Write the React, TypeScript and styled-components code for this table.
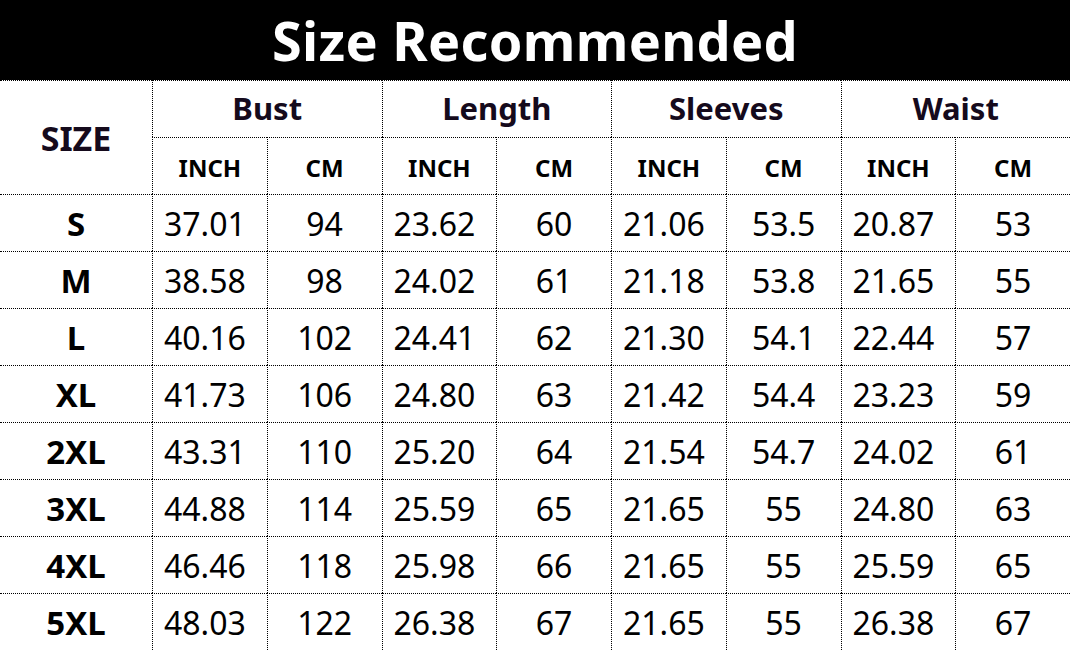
import React from "react";
import styled, { createGlobalStyle } from "styled-components";

// 사이즈 표 데이터
interface SizeRow {
  size: string;
  values: string[];
}

const groups = ["Bust", "Length", "Sleeves", "Waist"];

const rows: SizeRow[] = [
  { size: "S", values: ["37.01", "94", "23.62", "60", "21.06", "53.5", "20.87", "53"] },
  { size: "M", values: ["38.58", "98", "24.02", "61", "21.18", "53.8", "21.65", "55"] },
  { size: "L", values: ["40.16", "102", "24.41", "62", "21.30", "54.1", "22.44", "57"] },
  { size: "XL", values: ["41.73", "106", "24.80", "63", "21.42", "54.4", "23.23", "59"] },
  { size: "2XL", values: ["43.31", "110", "25.20", "64", "21.54", "54.7", "24.02", "61"] },
  { size: "3XL", values: ["44.88", "114", "25.59", "65", "21.65", "55", "24.80", "63"] },
  { size: "4XL", values: ["46.46", "118", "25.98", "66", "21.65", "55", "25.59", "65"] },
  { size: "5XL", values: ["48.03", "122", "26.38", "67", "21.65", "55", "26.38", "67"] },
];

const lineStyle = "1px dotted #000";
const headColor = "#150a1c";

const GlobalStyle = createGlobalStyle`
  html, body {
    margin: 0;
    padding: 0;
    background: #fff;
    font-family: "Noto Sans", "Open Sans", sans-serif;
  }
`;

const Page = styled.div`
  width: 1070px;
  height: 650px;
  overflow: hidden;
  background: #fff;
`;

const TitleBar = styled.div`
  height: 80px;
  background: #000;
  color: #fff;
  display: flex;
  align-items: center;
  justify-content: center;
  font-size: 54px;
  font-weight: 700;
  letter-spacing: 0.3px;
`;

const Grid = styled.div`
  display: grid;
  grid-template-columns: 152px repeat(8, 1fr);
  grid-auto-rows: 57px;
`;

const Cell = styled.div<{ $first?: boolean; $span?: number; $rows?: number }>`
  display: flex;
  align-items: center;
  justify-content: center;
  border-top: ${lineStyle};
  border-left: ${({ $first }) => ($first ? "none" : lineStyle)};
  grid-column: span ${({ $span }) => $span || 1};
  grid-row: span ${({ $rows }) => $rows || 1};
`;

const SizeHead = styled(Cell)`
  font-size: 34px;
  font-weight: 700;
  color: ${headColor};
`;

const GroupHead = styled(Cell)`
  font-size: 31px;
  font-weight: 700;
  color: ${headColor};
  padding-bottom: 2px;
`;

const UnitHead = styled(Cell)`
  font-size: 24px;
  font-weight: 700;
  color: #000;
  padding-top: 2px;
`;

const SizeLabel = styled(Cell)`
  font-size: 33px;
  font-weight: 700;
  color: #000;
`;

// INCH 값은 살짝 왼쪽으로 치우쳐 있음
const Value = styled(Cell)<{ $inch?: boolean }>`
  font-size: 32px;
  font-weight: 400;
  color: #000;
  padding-right: ${({ $inch }) => ($inch ? "10px" : "0")};
`;

export default function App() {
  return (
    <Page>
      <GlobalStyle />
      <TitleBar>Size Recommended</TitleBar>
      <Grid>
        <SizeHead $first $rows={2}>
          SIZE
        </SizeHead>
        {groups.map((g) => (
          <GroupHead key={g} $span={2}>
            {g}
          </GroupHead>
        ))}
        {groups.map((g) => (
          <React.Fragment key={g}>
            <UnitHead>INCH</UnitHead>
            <UnitHead>CM</UnitHead>
          </React.Fragment>
        ))}
        {rows.map((row) => (
          <React.Fragment key={row.size}>
            <SizeLabel $first>{row.size}</SizeLabel>
            {row.values.map((v, i) => (
              <Value key={i} $inch={i % 2 === 0}>
                {v}
              </Value>
            ))}
          </React.Fragment>
        ))}
      </Grid>
    </Page>
  );
}
